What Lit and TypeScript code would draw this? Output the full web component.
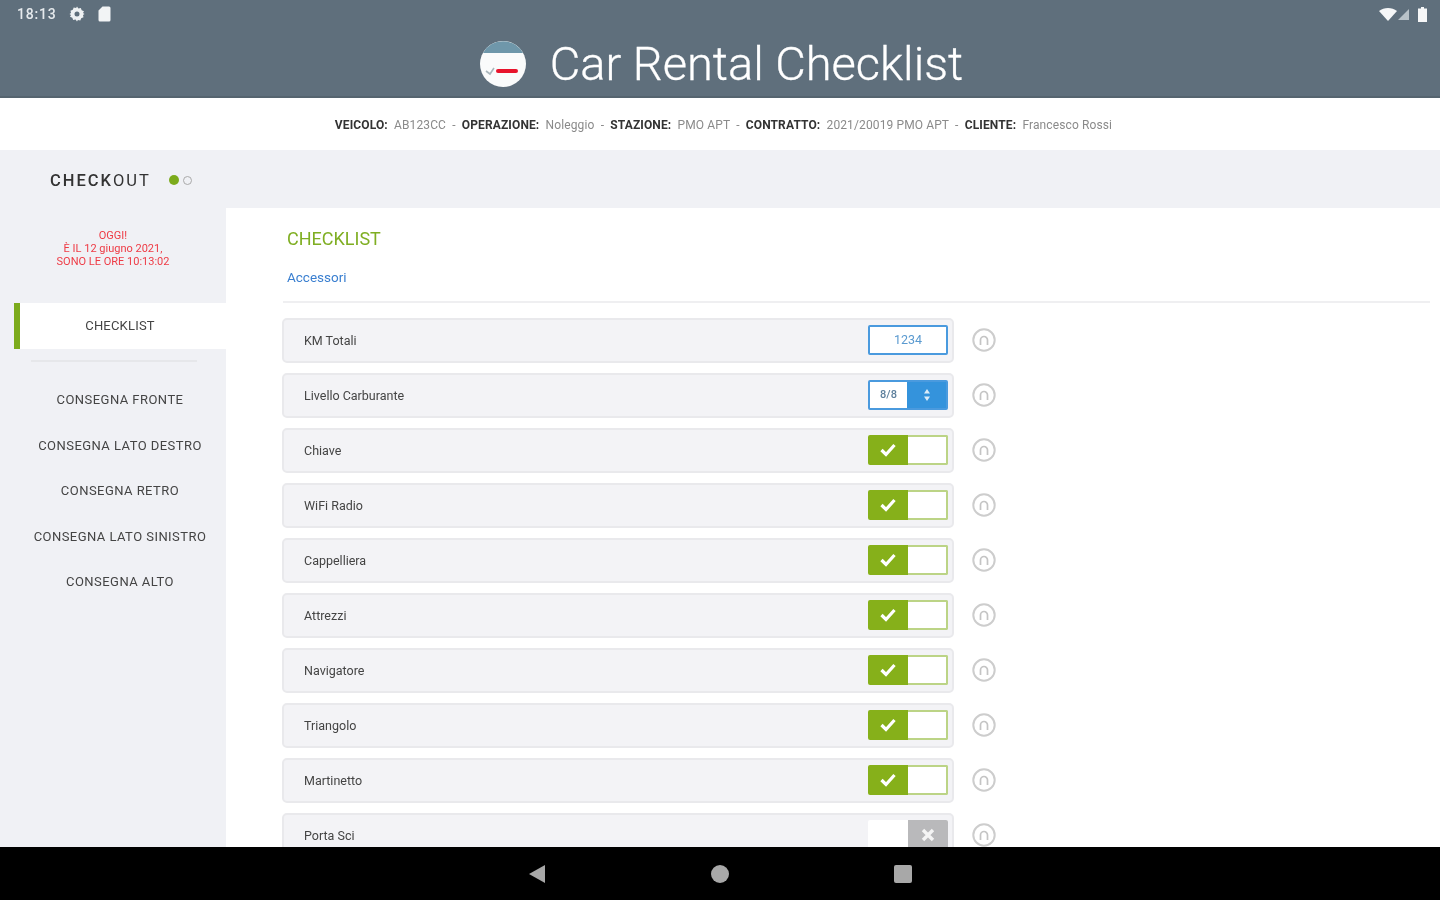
import { LitElement, html, css } from "lit";
import { customElement } from "lit/decorators.js";

const NAV = ["CONSEGNA FRONTE", "CONSEGNA LATO DESTRO", "CONSEGNA RETRO", "CONSEGNA LATO SINISTRO", "CONSEGNA ALTO"];
const ROWS: [string, string][] = [
  ["KM Totali", "input"], ["Livello Carburante", "select"], ["Chiave", "on"], ["WiFi Radio", "on"],
  ["Cappelliera", "on"], ["Attrezzi", "on"], ["Navigatore", "on"], ["Triangolo", "on"], ["Martinetto", "on"], ["Porta Sci", "off"],
];
const INFO: [string, string][] = [
  ["VEICOLO:", "AB123CC"], ["OPERAZIONE:", "Noleggio"], ["STAZIONE:", "PMO APT"],
  ["CONTRATTO:", "2021/20019 PMO APT"], ["CLIENTE:", "Francesco Rossi"],
];

@customElement("app-root")
export class AppRoot extends LitElement {
  static styles = css`
    :host { display: flex; flex-direction: column; width: 1440px; height: 900px; overflow: hidden; font-family: Roboto, "Liberation Sans", sans-serif; background: #fff; color: #444; }
    .header { height: 98px; flex: none; background: #5f6f7c; position: relative; box-shadow: inset 0 -2px 0 #55646f; display: flex; flex-direction: column; }
    .status { height: 28px; display: flex; align-items: center; padding: 0 13px 0 17px; color: #e6eaed; }
    .time { font-size: 14px; font-weight: 500; width: 52px; letter-spacing: .8px; filter: blur(.7px); }
    .status svg { display: block; }
    .status .gap { margin-right: 13px; }
    .spacer { flex: 1; }
    .title { display: flex; align-items: center; justify-content: center; gap: 23px; margin-top: 9px; margin-left: 2px; }
    .title h1 { margin: 0; font-size: 47px; font-weight: 300; color: #fff; line-height: 54px; -webkit-text-stroke: .3px #fff; filter: blur(.6px); }
    .info { height: 52px; flex: none; display: flex; align-items: center; justify-content: center; padding: 2px 0 0 7px; box-sizing: border-box; }
    .info div { font-size: 12px; letter-spacing: .12px; color: #8a8a8a; filter: blur(.7px); white-space: pre; }
    .info b { color: #333; font-weight: 700; }
    .section { height: 58px; flex: none; background: #f0f1f5; display: flex; align-items: center; padding-left: 50px; padding-top: 2px; box-sizing: border-box; }
    .section .name { font-size: 16.5px; letter-spacing: 2px; color: #333; font-weight: 400; width: 119px; filter: blur(.6px); }
    .section .name b { font-weight: 500; }
    .dot { width: 10px; height: 10px; border-radius: 50%; background: #7cab1c; margin-right: 4px; }
    .ring { width: 7px; height: 7px; border-radius: 50%; border: 1px solid #aaa; }
    .body { flex: 1; min-height: 0; display: flex; }
    .side { width: 226px; flex: none; background: #f0f1f5; }
    .date { height: 95px; box-sizing: border-box; padding-top: 21px; text-align: center; font-size: 11px; line-height: 13px; color: #ee3b45; filter: blur(.7px); }
    .active { display: flex; align-items: stretch; margin-left: 14px; height: 46px; background: #fff; }
    .active i { width: 6px; background: #7cab1c; }
    .active span { flex: 1; text-align: center; line-height: 46px; font-size: 13px; letter-spacing: .2px; color: #444; margin-right: 6px; filter: blur(.7px); }
    .sep { height: 2px; background: #e6e7ea; margin: 11px 29px 0 31px; }
    .nav { display: flex; flex-direction: column; margin-top: 28px; padding-left: 14px; }
    .nav div { height: 45.6px; line-height: 20px; text-align: center; font-size: 13px; color: #444; letter-spacing: .45px; filter: blur(.7px); }
    .main { flex: 1; min-width: 0; padding: 21px 10px 0 57px; overflow: hidden; }
    h2 { margin: 0 0 0 4px; font-size: 18px; font-weight: 400; line-height: 20px; color: #7fae22; filter: blur(.6px); }
    .tab { margin: 20px 0 0 4px; font-size: 13.5px; line-height: 16px; color: #3a7fd0; filter: blur(.7px); }
    .rule { height: 2px; background: #efeff1; margin-top: 16px; margin-bottom: 15px; }
    .rows { display: flex; flex-direction: column; gap: 10px; margin-left: -1px; }
    .line { display: flex; align-items: center; height: 45px; flex: none; }
    .row { width: 672px; height: 45px; box-sizing: border-box; flex: none; display: flex; align-items: center; justify-content: space-between; background: #f3f3f6; border: 2px solid #e9e9ec; border-radius: 5px; padding: 0 4px 0 20px; font-size: 12.5px; color: #444; }
    .label { filter: blur(.7px); }
    .ctl { width: 80px; height: 30px; box-sizing: border-box; display: flex; overflow: hidden; border-radius: 2px; background: #fff; margin-bottom: 2px; }
    .input { border: 2px solid #4a9ade; align-items: center; justify-content: center; color: #5a9ad0; font-size: 12.5px; }
    .input span, .sel span { filter: blur(.7px); }
    .sel { border: 2px solid #4a9ade; }
    .sel span { flex: 1; display: flex; align-items: center; justify-content: center; color: #5c7f9c; font-size: 11px; font-weight: 500; }
    .sel i { width: 39px; background: #3493dc; display: flex; align-items: center; justify-content: center; }
    .tg i { width: 40px; display: flex; align-items: center; justify-content: center; }
    .tg.on i { background: #86b01a; }
    .tg u { flex: 1; box-sizing: border-box; border: 2px solid #bcd486; border-left: 0; }
    .tg.off u { border: 0; }
    .tg.off i { background: #b9b9bb; }
    .hint { margin-left: 18px; margin-bottom: 1px; display: block; }
    .navbar { height: 53px; flex: none; background: #000; display: flex; align-items: center; padding-left: 528px; }
    .navbar svg { display: block; }
    .navbar .c { margin-left: 165px; }
    .navbar .s { margin-left: 165px; }
  `;

  private check() {
    return html`<svg width="18" height="16" viewBox="0 0 18 16"><path d="M2.500 8 7 12.500 15.500 3" fill="none" stroke="#fff" stroke-width="3.200"/></svg>`;
  }
  private cross() {
    return html`<svg width="14" height="14" viewBox="0 0 14 14"><path d="M2 2 12 12M12 2 2 12" fill="none" stroke="#f4f4f4" stroke-width="3.400"/></svg>`;
  }
  private hint() {
    return html`<svg class="hint" width="24" height="24" viewBox="0 0 24 24">
      <circle cx="12" cy="12" r="10.700" fill="none" stroke="#cdcdcd" stroke-width="2"/>
      <path d="M8.500 17V12a3.500 3.500 0 0 1 7 0V17" fill="none" stroke="#c4c4c4" stroke-width="1.700"/>
    </svg>`;
  }
  private control(kind: string) {
    if (kind === "input") return html`<div class="ctl input"><span>1234</span></div>`;
    if (kind === "select") return html`<div class="ctl sel"><span>8/8</span><i>
      <svg width="8" height="16" viewBox="0 0 8 16"><path d="M4 2 7 6.500H1ZM4 14 1 9.500H7Z" fill="#dcecf8"/></svg></i></div>`;
    if (kind === "on") return html`<div class="ctl tg on"><i>${this.check()}</i><u></u></div>`;
    return html`<div class="ctl tg off"><u></u><i>${this.cross()}</i></div>`;
  }

  render() {
    return html`
      <header class="header">
        <div class="status">
          <span class="time">18:13</span>
          <svg class="gap" width="16" height="16" viewBox="0 0 16 16"><path fill-rule="evenodd" fill="#eef1f3" d="M8 .5l1.400 2 2.400-.5.9 2.300 2.300.9L14 7l1.500 1-1.500 1 .5 2.300-2.300.9-.9 2.300-2.400-.5L8 15.500l-1.400-2-2.400.5-.9-2.300-2.300-.9L2 9 .5 8 2 7l-.5-2.300 2.300-.9.9-2.300 2.400.5ZM8 5.500a2.500 2.500 0 1 0 0 5 2.500 2.500 0 0 0 0-5Z"/></svg>
          <svg width="13" height="16" viewBox="0 0 13 16"><path fill="#f2f4f5" d="M4.500.5H11a1.500 1.500 0 0 1 1.500 1.500v12a1.500 1.500 0 0 1-1.500 1.500H2A1.500 1.500 0 0 1 .5 14V4.500Z"/></svg>
          <span class="spacer"></span>
          <svg width="18" height="13" viewBox="0 0 18 13"><path fill="#f6f7f8" d="M0 3C5-1 13-1 18 3L9 13Z"/></svg>
          <svg style="margin:0 8px 0 1px" width="12" height="11" viewBox="0 0 12 11"><path fill="#b9c2c8" d="M11 0V11H0Z"/></svg>
          <svg width="9" height="15" viewBox="0 0 9 15"><path fill="#f6f7f8" d="M3 0H6V1.500H9V15H0V1.500H3Z"/></svg>
        </div>
        <div class="title">
          <svg width="48" height="48" viewBox="0 0 48 48">
            <circle cx="24" cy="24" r="23" fill="#fafbfb"/>
            <path d="M4 13A23 23 0 0 1 44 13Z" fill="#6f97aa"/>
            <path d="M19 31H37" stroke="#e8142c" stroke-width="4" stroke-linecap="round"/>
            <path d="M7 31 11 34 15 28" fill="none" stroke="#a9b6bc" stroke-width="1.600"/>
          </svg>
          <h1>Car Rental Checklist</h1>
        </div>
      </header>
      <div class="info"><div>${INFO.map(([k, v], i) => html`${i ? "  -  " : ""}<b>${k}</b>  ${v}`)}</div></div>
      <div class="section">
        <div class="name"><b>CHECK</b>OUT</div>
        <span class="dot"></span><span class="ring"></span>
      </div>
      <div class="body">
        <aside class="side">
          <div class="date">OGGI!<br />È IL 12 giugno 2021,<br />SONO LE ORE 10:13:02</div>
          <div class="active"><i></i><span>CHECKLIST</span></div>
          <div class="sep"></div>
          <div class="nav">${NAV.map((n) => html`<div>${n}</div>`)}</div>
        </aside>
        <main class="main">
          <h2>CHECKLIST</h2>
          <div class="tab">Accessori</div>
          <div class="rule"></div>
          <div class="rows">
            ${ROWS.map(([label, kind]) => html`
              <div class="line">
                <div class="row"><span class="label">${label}</span>${this.control(kind)}</div>
                ${this.hint()}
              </div>`)}
          </div>
        </main>
      </div>
      <footer class="navbar">
        <svg width="18" height="20" viewBox="0 0 18 20"><path d="M1 10 17 1V19Z" fill="#a8a8a8"/></svg>
        <svg class="c" width="18" height="18" viewBox="0 0 18 18"><circle cx="9" cy="9" r="9" fill="#a8a8a8"/></svg>
        <svg class="s" width="18" height="18" viewBox="0 0 18 18"><rect width="18" height="18" rx="2" fill="#a8a8a8"/></svg>
      </footer>
    `;
  }
}
